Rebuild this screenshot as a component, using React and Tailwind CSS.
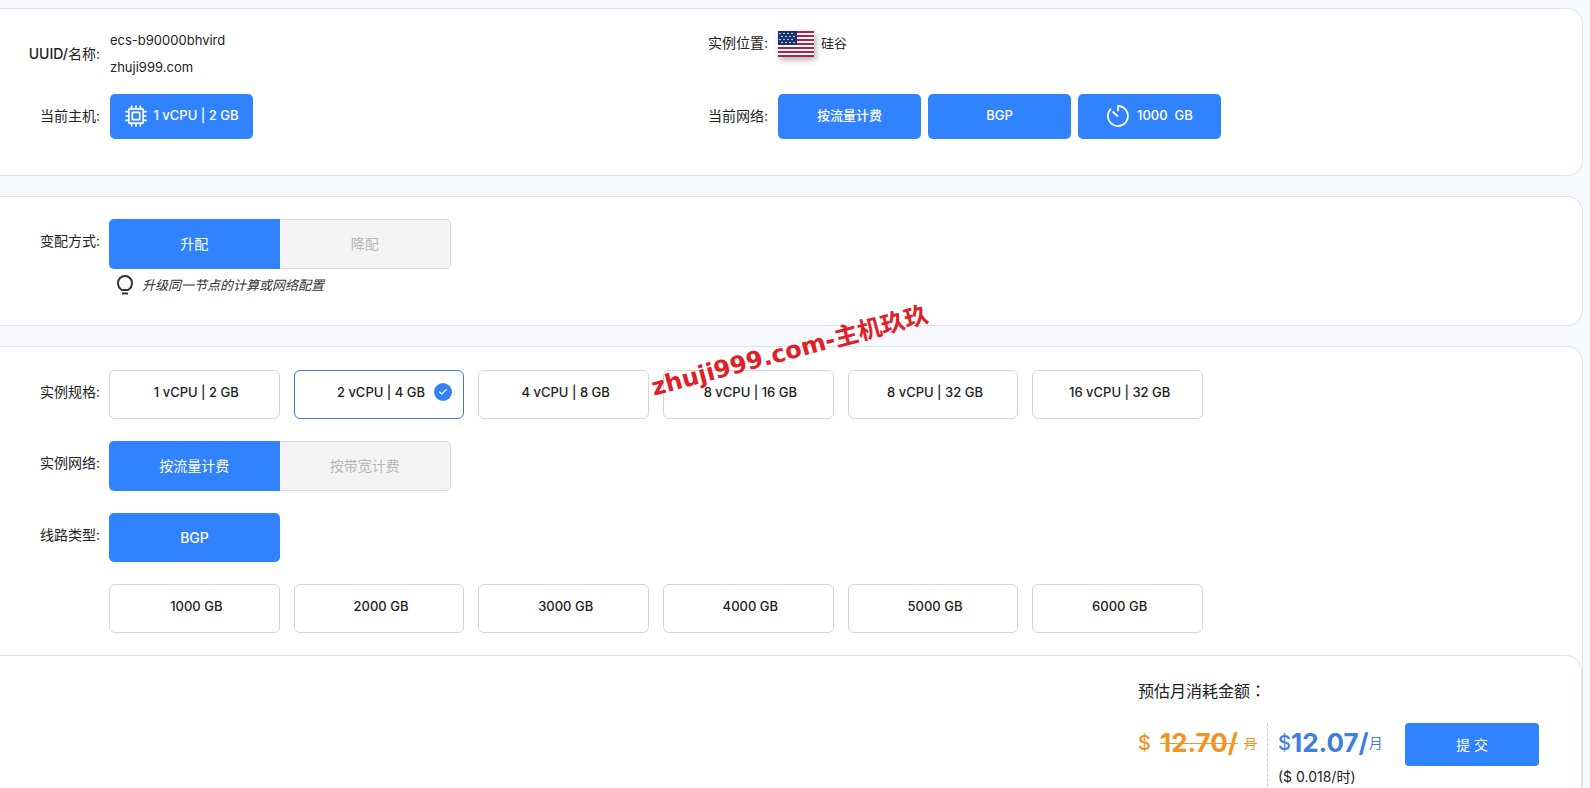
import { useState } from "react";
import { Check } from "lucide-react";

const specs = ["1 vCPU | 2 GB", "2 vCPU | 4 GB", "4 vCPU | 8 GB", "8 vCPU | 16 GB", "8 vCPU | 32 GB", "16 vCPU | 32 GB"];
const traffic = ["1000 GB", "2000 GB", "3000 GB", "4000 GB", "5000 GB", "6000 GB"];

function CpuIcon() {
  return (
    <svg width="22" height="22" viewBox="0 0 22 22" fill="none" stroke="currentColor" strokeWidth="1.7" strokeLinecap="round" strokeLinejoin="round">
      <rect x="3.8" y="3.8" width="14.4" height="14.4" rx="1" />
      <rect x="7.3" y="7.3" width="7.4" height="7.4" />
      <path d="M6.6 1v2.5M11 1v2.5M15.4 1v2.5M6.6 18.5v2.5M11 18.5v2.5M15.4 18.5v2.5" />
      <path d="M1 6.6h2.5M1 11h2.5M1 15.4h2.5M18.5 6.6h2.5M18.5 11h2.5M18.5 15.4h2.5" />
    </svg>
  );
}

function TimerIcon() {
  return (
    <svg width="24" height="24" viewBox="0 0 24 24" fill="none" stroke="currentColor" strokeWidth="1.8" strokeLinecap="round" strokeLinejoin="round">
      <path d="M12 6.5V2a10 10 0 1 1-7.4 3.2" />
      <path d="M7 8l4.5 4" />
    </svg>
  );
}

function BulbIcon() {
  return (
    <svg width="16" height="20" viewBox="0 0 16 20" fill="none" stroke="#333" strokeWidth="2" strokeLinejoin="round">
      <path d="M5 15C2.5 13.5 1 11 1 8a7 7 0 0 1 14 0c0 3-1.5 5.5-4 7z" />
      <path d="M5 18.5h6" />
    </svg>
  );
}

function UsFlag() {
  return (
    <svg className="shadow-[2px_3px_6px_rgba(0,0,0,0.3)]" width="36" height="26" viewBox="0 0 36 26" role="img" aria-label="US">
      <rect width="36" height="26" fill="#fff" />
      {[0, 2, 4, 6, 8, 10, 12].map((i) => (
        <rect key={i} y={i * 2} width="36" height="2" fill="#b22245" />
      ))}
      <rect width="19" height="14" fill="#17306b" />
      {[2, 5, 8, 11].map((y, row) =>
        [2, 6, 10, 14].map((x) => <circle key={`${x}-${y}`} cx={x + (row % 2) * 2} cy={y + 0.5} r="0.8" fill="#fff" />)
      )}
    </svg>
  );
}

function Card({ className, children }) {
  return <section className={`rounded-r-2xl border border-l-0 border-[#e0e2e6] bg-white ${className}`}>{children}</section>;
}

function InfoRow({ label, children }) {
  return (
    <div className="flex items-center">
      <span className="w-[100px] shrink-0 pb-[2px] text-right text-sm">{label}</span>
      <div className="ml-[10px] flex items-center gap-[7px]">{children}</div>
    </div>
  );
}

function FormRow({ label, children }) {
  return (
    <div className="flex items-start">
      <span className="w-[100px] shrink-0 text-right text-sm leading-[44px]">{label}</span>
      <div className="ml-[9px] min-w-0 flex-1">{children}</div>
    </div>
  );
}

function Tag({ children }) {
  return (
    <span className="flex h-[45px] w-[143px] items-center justify-center gap-[7px] rounded-[5px] bg-[#3082ff] pb-[2px] text-[13px] font-medium text-white">
      {children}
    </span>
  );
}

function Segmented({ options, value, onChange }) {
  return (
    <div className="flex w-[342px]">
      {options.map((option) => (
        <button
          key={option}
          type="button"
          aria-pressed={option === value}
          onClick={() => onChange(option)}
          className={
            option === value
              ? "h-[50px] flex-1 bg-[#3082ff] text-sm text-white first:rounded-l-[5px] last:rounded-r-[5px]"
              : "h-[50px] flex-1 border border-[#d9d9d9] bg-[#f4f4f4] text-sm text-[#b8b8b8] first:rounded-l-[5px] first:border-r-0 last:rounded-r-[5px] last:border-l-0"
          }
        >
          {option}
        </button>
      ))}
    </div>
  );
}

function OptionGrid({ options, value, onChange }) {
  return (
    <div className="grid max-w-[1094px] grid-cols-6 gap-[14px]">
      {options.map((option) => (
        <button
          key={option}
          type="button"
          aria-pressed={option === value}
          onClick={() => onChange(option)}
          className={`relative h-[49px] rounded-md border bg-white pb-[3px] pl-1 text-[13px] font-medium ${
            option === value ? "border-[#3b7ddd]" : "border-[#d5d5d5]"
          }`}
        >
          {option}
          {option === value && (
            <span className="absolute top-3 right-[11px] flex size-[18px] items-center justify-center rounded-full bg-[#3580f2] text-white">
              <Check size={10} strokeWidth={3} />
            </span>
          )}
        </button>
      ))}
    </div>
  );
}

export default function App() {
  const [mode, setMode] = useState("升配");
  const [spec, setSpec] = useState("2 vCPU | 4 GB");
  const [billing, setBilling] = useState("按流量计费");
  const [amount, setAmount] = useState("");

  return (
    <div className="h-screen overflow-hidden bg-[#f8f9fd] pt-2 pr-[7px] font-['Inter','Noto_Sans_CJK_SC',sans-serif] text-[#222]">
      <Card className="grid grid-cols-[19fr_26fr] gap-y-[11px] pt-[18px] pb-9">
        <InfoRow label={<><span className="font-medium">UUID/</span>名称:</>}>
          <div className="pb-[2px] text-[13px] leading-[27px]">
            <p>ecs-b90000bhvird</p>
            <p>zhuji999.com</p>
          </div>
        </InfoRow>
        <div className="pt-1">
          <InfoRow label="实例位置:">
            <UsFlag />
            <span className="text-[13px]">硅谷</span>
          </InfoRow>
        </div>
        <InfoRow label="当前主机:">
          <Tag>
            <CpuIcon />
            1 vCPU | 2 GB
          </Tag>
        </InfoRow>
        <InfoRow label="当前网络:">
          <Tag>按流量计费</Tag>
          <Tag>BGP</Tag>
          <Tag>
            <TimerIcon />
            <span>1000</span>
            <span>GB</span>
          </Tag>
        </InfoRow>
      </Card>

      <Card className="mt-5 pt-[22px] pb-[29px]">
        <FormRow label="变配方式:">
          <Segmented options={["升配", "降配"]} value={mode} onChange={setMode} />
          <p className="mt-[5px] ml-2 flex items-center gap-[9px] text-[13px] leading-[22px] text-[#333] italic">
            <BulbIcon />
            升级同一节点的计算或网络配置
          </p>
        </FormRow>
      </Card>

      <Card className="mt-5 pt-[23px]">
        <div className="flex flex-col gap-[22px]">
          <FormRow label="实例规格:">
            <OptionGrid options={specs} value={spec} onChange={setSpec} />
          </FormRow>
          <FormRow label="实例网络:">
            <Segmented options={["按流量计费", "按带宽计费"]} value={billing} onChange={setBilling} />
          </FormRow>
          <FormRow label="线路类型:">
            <button type="button" className="h-[49px] w-[171px] rounded-[5px] bg-[#3082ff] text-sm font-medium text-white">
              BGP
            </button>
          </FormRow>
          <FormRow label="">
            <OptionGrid options={traffic} value={amount} onChange={setAmount} />
          </FormRow>
        </div>

        <footer className="mt-[22px] flex justify-end rounded-tr-2xl border-t border-r border-[#e0e2e6] pt-5 pr-[42px] pb-8">
          <div>
            <p className="leading-7">
              预估月消耗金额<span className="font-['Noto_Sans_CJK_TC',sans-serif]" lang="zh-TW">：</span>
            </p>
            <div className="mt-[18px] flex items-start">
              <div className="flex w-[129px] items-center leading-10 text-[#ef9425]">
                <span className="mr-[9px] text-xl font-medium">$</span>
                <del className="text-[26px] font-bold decoration-1">12.70/</del>
                <del className="ml-[6px] text-[13px] decoration-1">月</del>
              </div>
              <div className="border-l border-dashed border-[#ccc] pb-4 pl-[10px]">
                <div className="flex w-[127px] items-center leading-10 text-[#3f7fdc]">
                  <span className="text-xl font-medium">$</span>
                  <strong className="text-[26px] font-bold">12.07/</strong>
                  <span className="text-sm leading-10">月</span>
                </div>
                <p className="text-sm leading-7">($ 0.018/时)</p>
              </div>
              <button type="button" className="h-[43px] w-[134px] rounded-[4px] bg-[#3082ff] text-sm text-white">
                提 交
              </button>
            </div>
          </div>
        </footer>
      </Card>

      <div className="pointer-events-none absolute top-[335px] left-[647px] -rotate-[15deg] text-2xl leading-8 font-bold whitespace-nowrap text-[#de2128] font-['DejaVu_Sans','Noto_Sans_CJK_SC',sans-serif]">
        zhuji999.com-主机玖玖
      </div>
    </div>
  );
}
